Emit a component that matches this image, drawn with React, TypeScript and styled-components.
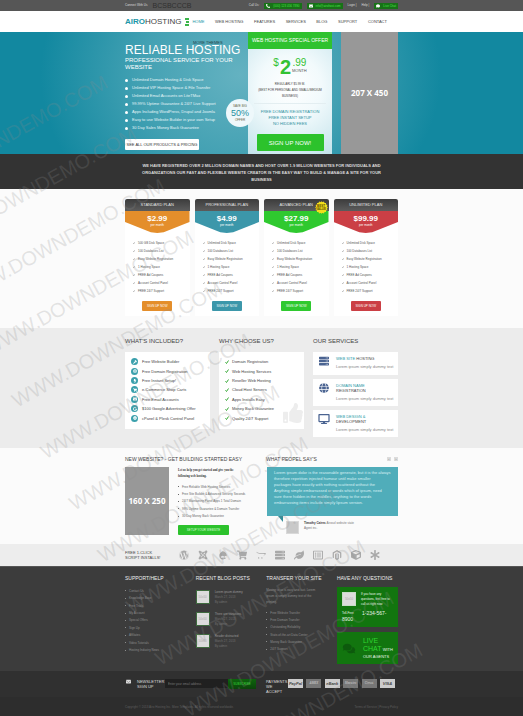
import React from "react";
import styled, { createGlobalStyle, css } from "styled-components";
import {
  FaWordpress, FaJoomla, FaDrupal, FaShoppingCart, FaOpencart, FaMagento, FaLeaf, FaRegListAlt,
  FaCube, FaAsterisk, FaThumbsUp, FaServer, FaGlobe, FaDesktop, FaEnvelope, FaPhoneAlt, FaComments,
  FaWrench, FaBolt, FaGoogle, FaCog, FaComment,
} from "react-icons/fa";

const GlobalStyle = createGlobalStyle`
  *, *::before, *::after { box-sizing: border-box; }
  body { margin: 0; background: #2d2d2d; font-family: "Liberation Sans", Arial, sans-serif; }
  h1, h2, h3, p, ul { margin: 0; padding: 0; font-weight: 400; }
  ul { list-style: none; }
  a { color: inherit; text-decoration: none; }
  button { border: 0; padding: 0; font-family: inherit; cursor: pointer; }
  svg { display: block; }
`;

const Page = styled.div`
  position: relative;
  overflow: hidden;
`;

const Container = styled.div`
  width: 100%;
  max-width: 273px;
  margin: 0 auto;
`;

/* ---------- top bar ---------- */

const TopBar = styled.div`
  background: #565656;
  color: #ddd;
  font-size: 3px;
  line-height: 11px;
  white-space: nowrap;
`;

const TopRow = styled(Container)`
  display: flex;
  align-items: center;
  gap: 5px;
`;

const Social = styled.span`
  flex: 1;
  font-size: 7px;
  color: #303030;
`;

const Chip = styled.a`
  display: flex;
  align-items: center;
  gap: 3px;
  height: 6px;
  padding: 0 2px;
  line-height: 6px;
  color: #49e049;
  background: #177217;
  svg { width: 4px; height: 4px; color: #fff; }
`;

/* ---------- navigation ---------- */

const Header = styled.header`
  background: #fff;
`;

const HeaderRow = styled(Container)`
  display: flex;
  align-items: center;
  height: 21px;
`;

const Logo = styled.a`
  display: flex;
  align-items: center;
  font-size: 8px;
  line-height: 10px;
  color: #444;
  b { color: #1d97a8; }
`;

const LogoMark = styled.svg`
  width: 4px;
  height: 8px;
  margin: 0 3px 0 4px;
`;

const Nav = styled.nav`
  flex: 1;
  display: flex;
  justify-content: space-between;
  padding-right: 11px;
  font-size: 4px;
  line-height: 8px;
  white-space: nowrap;
`;

const NavLink = styled.a<{ $active?: boolean }>`
  color: ${(p) => (p.$active ? "#1d97a8" : "#444")};
`;

/* ---------- hero ---------- */

const Hero = styled.section`
  background: radial-gradient(ellipse 200px 170px at 46% 35%, #64b2c1 0%, #43a1b3 50%, #1288a0 100%);
  color: #fff;
`;

const HeroRow = styled(Container)`
  display: grid;
  grid-template-columns: 1fr 84px 57px;
  column-gap: 9px;
`;

const HeroText = styled.div`
  position: relative;
  margin-right: -9px;
  padding-top: 12px;
`;

const HeroTitle = styled.h1`
  font-size: 12px;
  line-height: 13px;
  white-space: nowrap;
`;

const HeroSub = styled.h2`
  font-size: 6px;
  line-height: 7px;
`;

const ThemesTag = styled.span`
  position: absolute;
  left: 68px;
  top: 9px;
  font-size: 4px;
  line-height: 4px;
  color: #26434c;
`;

const HeroList = styled.ul`
  padding-top: 5px;
  font-size: 4px;
  line-height: 8px;
  color: #e6f5f8;
  li { display: flex; align-items: center; gap: 4px; white-space: nowrap; }
  li::before { content: ""; width: 3px; height: 3px; border-radius: 50%; background: #fff; }
`;

const ProductsButton = styled.button`
  margin-top: 6px;
  width: 74px;
  height: 11px;
  border-radius: 1px;
  background: #fff;
  color: #333;
  font-size: 4px;
  white-space: nowrap;
`;

const Saving = styled.div`
  position: absolute;
  right: -6px;
  top: 67px;
  width: 28px;
  height: 28px;
  padding-top: 5px;
  border-radius: 50%;
  background: #eef8fb;
  text-align: center;
  font-size: 3px;
  line-height: 4px;
  color: #664;
  z-index: 1;
  strong { display: block; font-size: 9px; line-height: 10px; font-weight: 400; color: #25909f; }
`;

const Offer = styled.div`
  background: radial-gradient(circle at 50% 45%, #fff 0%, #f2fafc 40%, #c3e3eb 100%);
  text-align: center;
  white-space: nowrap;
`;

const OfferTitle = styled.h2`
  background: #2fc22f;
  font-size: 5px;
  line-height: 17px;
`;

const OfferPrice = styled.div`
  display: flex;
  justify-content: center;
  align-items: flex-start;
  padding-top: 9px;
  color: #33c233;
  font-size: 10px;
  line-height: 10px;
  b { font-size: 20px; line-height: 18px; margin: 0 1px; }
  small { display: block; font-size: 4px; line-height: 5px; color: #555; }
`;

const OfferNote = styled.p`
  margin: 5px 6px 0;
  padding-bottom: 4px;
  border-bottom: 1px solid #e3eef1;
  font-size: 3px;
  line-height: 6px;
  color: #444;
`;

const OfferPerks = styled.p`
  padding-top: 5px;
  font-size: 4px;
  line-height: 6px;
  color: #2b8f9c;
`;

const OfferButton = styled.button`
  width: 67px;
  height: 17px;
  margin: 7px 0 3px;
  border-radius: 1px;
  background: #2cc22c;
  color: #fff;
  font-size: 6px;
`;

const Placeholder = styled.div`
  display: flex;
  align-items: center;
  justify-content: center;
  background: #989898;
  color: #fff;
  font: 700 8px/10px "Open Sans", sans-serif;
  white-space: nowrap;
`;

const Banner = styled.p`
  padding: 8px 0 6px;
  background: #333;
  color: #ddd;
  text-align: center;
  font-size: 4px;
  font-weight: 700;
  line-height: 7px;
  white-space: nowrap;
`;

/* ---------- plans ---------- */

const Plans = styled.section`
  padding: 10px 0 12px;
  background: #fbfbfb;
`;

const PlanGrid = styled(Container)`
  display: grid;
  grid-template-columns: repeat(4, 1fr);
  gap: 5px;
`;

const PlanCard = styled.article`
  position: relative;
  background: #fff;
  text-align: center;
`;

const PlanName = styled.h3`
  background: linear-gradient(#3c3c3c, #5c5c5c);
  border-radius: 2px 2px 0 0;
  color: #e6e6e6;
  font-size: 4px;
  line-height: 12px;
`;

const PlanPrice = styled.div<{ $color: string }>`
  height: 22px;
  padding-top: 3px;
  background: ${(p) => p.$color};
  clip-path: polygon(0 0, 100% 0, 100% 50%, 60% 97%, 50% 100%, 40% 97%, 0 50%);
  color: #fff;
  font-size: 3px;
  line-height: 5px;
  strong { display: block; font-size: 8px; line-height: 9px; }
`;

const PlanList = styled.ul`
  padding: 6px 0 6px 8px;
  text-align: left;
  font-size: 3px;
  line-height: 8px;
  color: #555;
`;

const CheckItem = styled.li<{ $gap: number }>`
  display: flex;
  align-items: center;
  gap: ${(p) => p.$gap}px;
  white-space: nowrap;
`;

const CheckSvg = styled.svg<{ $size: number }>`
  flex: none;
  width: ${(p) => p.$size}px;
  height: ${(p) => p.$size}px;
`;

const Check = ({ size, color }: { size: number; color: string }) => (
  <CheckSvg $size={size} viewBox="0 0 8 8" fill="none" stroke={color} strokeWidth="2">
    <path d="M1 4.5 3 7 7 1" />
  </CheckSvg>
);

const PlanButton = styled.button<{ $color: string }>`
  display: block;
  width: 30px;
  height: 10px;
  margin: 0 auto 5px;
  border-radius: 1px;
  background: ${(p) => p.$color};
  color: #fff;
  font-size: 3px;
`;

const BestBadge = styled.span`
  position: absolute;
  right: 1px;
  top: 2px;
  width: 13px;
  height: 13px;
  display: flex;
  align-items: center;
  justify-content: center;
  text-align: center;
  font-size: 3px;
  line-height: 3px;
  font-weight: 700;
  color: #5a4b00;
  z-index: 1;
  svg { position: absolute; inset: 0; width: 100%; height: 100%; }
  span { position: relative; }
`;

/* ---------- features ---------- */

const Features = styled.section`
  padding: 9px 0 11px;
  background: #ececec;
`;

const FeatureGrid = styled(Container)`
  display: grid;
  grid-template-columns: repeat(3, 1fr);
  gap: 9px;
`;

const Heading = styled.h2`
  font-size: 6px;
  line-height: 9px;
  margin-bottom: 6px;
  color: #444;
  white-space: nowrap;
`;

const FeatureCard = styled.div`
  position: relative;
  background: #fff;
`;

const FeatureList = styled.ul`
  display: grid;
  grid-auto-rows: 1fr;
  height: 77px;
  padding: 5px 6px 6px;
  font-size: 4px;
  color: #444;
`;

const RoundIcon = styled.span`
  display: flex;
  align-items: center;
  justify-content: center;
  width: 7px;
  height: 7px;
  border-radius: 50%;
  background: #3ba0ac;
  color: #fff;
  svg { width: 4px; height: 4px; }
`;

const Thumb = styled(FaThumbsUp)`
  position: absolute;
  right: 1px;
  bottom: 6px;
  width: 20px;
  height: 20px;
  color: #ededed;
`;

const ServiceStack = styled.div`
  display: grid;
  grid-template-rows: 23px 27px 27px;
  gap: 4px;
`;

const ServiceCard = styled.article`
  display: grid;
  grid-template-columns: 13px 1fr;
  column-gap: 5px;
  padding: 4px 0 4px 5px;
  background: #fff;
  svg { width: 12px; height: 10px; color: #4a6391; }
  h3 { font-size: 4px; line-height: 5px; color: #444; }
  h3 a { color: #2b9aa7; }
  p { margin-top: 2px; font-size: 4px; line-height: 7px; color: #888; white-space: nowrap; }
`;

/* ---------- website builder + testimonials ---------- */

const Builder = styled.section`
  padding: 7px 0 9px;
  background: #fbfbfb;
`;

const BuilderGrid = styled(Container)`
  display: grid;
  grid-template-columns: 131px 1fr;
  column-gap: 10px;
`;

const SmallHeading = styled.h2<{ $light?: boolean }>`
  font-size: 5px;
  line-height: 8px;
  color: ${(p) => (p.$light ? "#ededed" : "#444")};
  white-space: nowrap;
`;

const HeadingRow = styled.div`
  display: flex;
  justify-content: space-between;
  align-items: center;
  padding-bottom: 4px;
`;

const Pager = styled.div`
  display: flex;
  gap: 3px;
  button { width: 4px; height: 4px; background: #dcdcdc; color: #888; font-size: 4px; line-height: 3px; }
`;

const BuilderBody = styled.div`
  display: grid;
  grid-template-columns: 44px 1fr;
  grid-template-rows: 68px;
  column-gap: 9px;
`;

const Intro = styled.p`
  font: 700 3px/6px "Liberation Serif", serif;
  color: #333;
  white-space: nowrap;
`;

const DotList = styled.ul<{ $rows: number; $color: string }>`
  display: grid;
  grid-template-rows: repeat(${(p) => p.$rows}, 1fr);
  height: ${(p) => Math.round(p.$rows * 7.4)}px;
  font-size: 3px;
  color: ${(p) => p.$color};
  li { display: flex; align-items: center; gap: 3px; white-space: nowrap; }
  li::before { content: ""; width: 1px; height: 1px; background: currentColor; }
`;

const SetupButton = styled.button`
  display: block;
  width: 51px;
  height: 10px;
  margin-top: 5px;
  border-radius: 1px;
  background: #2cc22c;
  color: #d8ffd8;
  font-size: 3px;
`;

const BuilderList = styled.div`
  padding-top: 4px;
`;

const Quote = styled.blockquote`
  position: relative;
  height: 49px;
  margin: 0 0 0 1px;
  padding: 3px 7px;
  background: #50adba;
  color: #d8f0f3;
  font-size: 4px;
  line-height: 6px;
  white-space: nowrap;
  &::after {
    content: "";
    position: absolute;
    left: 11px;
    top: 100%;
    border-top: 6px solid #2f8c99;
    border-left: 5px solid transparent;
  }
`;

const Author = styled.div`
  display: flex;
  gap: 5px;
  padding: 5px 0 0 20px;
  font-size: 3px;
  line-height: 5px;
  color: #777;
  b { color: #333; }
`;

const Avatar = styled.span`
  width: 13px;
  height: 13px;
  background: #c9c9c9;
  border: 1px solid #d9d9d9;
`;

/* ---------- script installers ---------- */

const Scripts = styled.section`
  padding: 6px 0;
  background: #ededed;
`;

const ScriptRow = styled(Container)`
  display: flex;
  align-items: center;
  font-size: 4px;
  line-height: 5px;
  color: #444;
`;

const ScriptIcons = styled.div`
  flex: 1;
  display: flex;
  justify-content: space-between;
  padding: 0 18px 0 19px;
  svg { width: 10px; height: 10px; color: #a9a9a9; }
`;

/* ---------- footer ---------- */

const Footer = styled.footer`
  background: #3c3c3c;
  color: #8c8c8c;
  border-top: 1px solid #555;
`;

const FooterGrid = styled(Container)`
  display: grid;
  grid-template-columns: repeat(4, 61px);
  justify-content: space-between;
  padding: 7px 0;
`;

const Column = styled.div`
  display: flex;
  flex-direction: column;
  h2 { margin-bottom: 5px; }
`;

const Post = styled.div`
  display: flex;
  gap: 5px;
  height: 22px;
  padding-top: 3px;
  font-size: 3px;
  line-height: 5px;
  white-space: nowrap;
  color: #707070;
  a { color: #999; }
`;

const PhotoBox = styled.span<{ $border: string }>`
  display: flex;
  align-items: center;
  justify-content: center;
  flex: none;
  width: 14px;
  height: 14px;
  background: #dcdcdc;
  border: 1px solid ${(p) => p.$border};
  color: #aaa;
  font-size: 3px;
`;

const TransferText = styled.p`
  padding-bottom: 4px;
  font-size: 3px;
  line-height: 6px;
  white-space: nowrap;
`;

const greenCard = css`
  background: #12750f;
  color: #e9f7e9;
`;

const PhoneCard = styled.div`
  ${greenCard}
  height: 40px;
  padding: 5px 0 0 5px;
  font-size: 3px;
  line-height: 5px;
  white-space: nowrap;
`;

const PhoneTop = styled.div`
  display: flex;
  gap: 5px;
`;

const PhoneNumber = styled.div`
  display: grid;
  grid-template-columns: 20px 1fr;
  padding-top: 3px;
  line-height: 6px;
  b { font-size: 5px; font-weight: 400; }
`;

const ChatCard = styled.a`
  ${greenCard}
  display: grid;
  grid-template-columns: 15px 1fr;
  column-gap: 6px;
  align-items: center;
  height: 32px;
  margin-top: 5px;
  padding-left: 5px;
  font-size: 4px;
  line-height: 7px;
  white-space: nowrap;
  svg { width: 14px; height: 11px; color: #0d5a0d; }
  strong { font-size: 7px; font-weight: 400; color: #2fd52f; }
`;

const Newsletter = styled.div`
  background: #303030;
`;

const NewsletterRow = styled(Container)`
  display: flex;
  align-items: flex-start;
  height: 26px;
  padding-top: 8px;
  font-size: 4px;
  line-height: 5px;
  color: #ddd;
`;

const MailIcon = styled(FaEnvelope)`
  flex: none;
  width: 7px;
  height: 5px;
  margin-right: 5px;
`;

const NewsLabel = styled.label`
  width: 28px;
`;

const EmailInput = styled.input`
  width: 63px;
  height: 9px;
  border: 0;
  padding: 0 3px;
  background: #202020;
  color: #aaa;
  font: 3px "Liberation Sans", sans-serif;
  &::placeholder { color: #777; }
`;

const Subscribe = styled.button`
  width: 28px;
  height: 10px;
  background: linear-gradient(#0d650d, #0b440b);
  color: #38d838;
  font-size: 3px;
`;

const PayLabel = styled.span`
  width: 22px;
  margin-left: 10px;
`;

const Cards = styled.div`
  flex: 1;
  display: flex;
  justify-content: space-between;
  padding-right: 3px;
`;

const PayCard = styled.span<{ $dim?: boolean }>`
  display: flex;
  align-items: center;
  justify-content: center;
  width: 15px;
  height: 9px;
  background: ${(p) => (p.$dim ? "#777" : "#ccc")};
  color: ${(p) => (p.$dim ? "#bbb" : "#444")};
  font-size: ${(p) => (p.$dim ? 3 : 4)}px;
  font-weight: 700;
  font-style: italic;
`;

const Legal = styled.div`
  background: #2d2d2d;
`;

const LegalRow = styled(Container)`
  display: flex;
  justify-content: space-between;
  font-size: 3px;
  line-height: 20px;
  color: #5d5d5d;
`;

/* ---------- diagonal watermark over the page ---------- */

const Watermark = styled.div`
  position: absolute;
  left: -115px;
  top: 170px;
  transform: rotate(-29deg);
  transform-origin: 0 0;
  pointer-events: none;
  font-size: 20px;
  line-height: 59px;
  white-space: nowrap;
  color: rgba(140, 140, 140, 0.22);
  z-index: 2;
`;

const navItems = ["HOME", "WEB HOSTING", "FEATURES", "SERVICES", "BLOG", "SUPPORT", "CONTACT"];

const heroItems = [
  "Unlimited Domain Hosting & Disk Space",
  "Unlimited VIP Hosting Space & File Transfer",
  "Unlimited Email Accounts on LiteTMax",
  "99.99% Uptime Guarantee & 24/7 Live Support",
  "Apps Including WordPress, Drupal and Joomla",
  "Easy to use Website Builder in your own Setup",
  "30 Day Sales Money Back Guarantee",
];

const plans = [
  { name: "STANDARD PLAN", price: "$2.99", color: "#e48e2b", space: "500 GB Disk Space" },
  { name: "PROFESSIONAL PLAN", price: "$4.99", color: "#3c97aa", space: "Unlimited Disk Space" },
  { name: "ADVANCED PLAN", price: "$27.99", color: "#2fc92f", space: "Unlimited Disk Space", best: true },
  { name: "UNLIMITED PLAN", price: "$99.99", color: "#cb3f45", space: "Unlimited Disk Space" },
];

const planItems = [
  "100 Databases List", "Easy Website Registration", "1 Hosting Space",
  "FREE Ad Coupons", "Account Control Panel", "FREE 24/7 Support",
];

const included = [
  { text: "Free Website Builder", Icon: FaWrench },
  { text: "Free Domain Registration", Icon: FaGlobe },
  { text: "Free Instant Setup!", Icon: FaBolt },
  { text: "e-Commerce Shop Carts", Icon: FaShoppingCart },
  { text: "Free Email Accounts", Icon: FaEnvelope },
  { text: "$100 Google Advertising Offer", Icon: FaGoogle },
  { text: "cPanel & Plesk Control Panel", Icon: FaCog },
];

const reasons = [
  "Domain Registration", "Web Hosting Services", "Reseller Web Hosting", "Cloud Host Servers",
  "Apps Installs Easy", "Money Back Guarantee", "Quality 24/7 Support",
];

const builderItems = [
  "Free Reliable Web Hosting Services",
  "Free Site Builder & Advanced Security Seconds",
  "24/7 Maintaining Panel Apps 1 Total Domain",
  "99% Uptime Guarantee & Domain Transfer",
  "30 Day Money Back Guarantee",
];

const support = [
  "Contact Us", "Knowledge Base", "Free Trials", "My Account", "Special Offers", "Sign Up",
  "Affiliates", "Video Tutorials", "Hosting Industry News",
];

const transfers = [
  "Free Website Transfer", "Free Domain Transfer", "Outstanding Reliability",
  "State-of-the-art Data Center", "Money Back Guarantee", "24/7 Support",
];

const scriptIcons = [
  FaWordpress, FaJoomla, FaDrupal, FaShoppingCart, FaOpencart, FaServer, FaLeaf, FaRegListAlt,
  FaMagento, FaCube, FaAsterisk,
];

const payments = [
  { label: "PayPal" }, { label: "AMEX", dim: true }, { label: "eBank" },
  { label: "Maestro", dim: true }, { label: "Cirrus", dim: true }, { label: "VISA" },
];

const Starburst = () => (
  <svg viewBox="0 0 26 26" fill="#f2de1c">
    {[0, 22.5, 45, 67.5].map((a) => (
      <rect key={a} x="4" y="4" width="18" height="18" transform={`rotate(${a} 13 13)`} />
    ))}
  </svg>
);

export default function App() {
  return (
    <Page>
      <GlobalStyle />
      <TopBar>
        <TopRow>
          <span>Connect With Us</span>
          <Social>BCSBCCCB</Social>
          <span>Call Us:</span>
          <Chip href="#call"><FaPhoneAlt />(000) 123 456 7890</Chip>
          <Chip href="#mail"><FaEnvelope />info@airohost.com</Chip>
          <a href="#login">Login |</a>
          <a href="#help">Help |</a>
          <Chip href="#chat"><FaComment />Live Chat</Chip>
        </TopRow>
      </TopBar>

      <Header>
        <HeaderRow>
          <Logo href="#home">
            <b>AIRO</b>HOSTING
            <LogoMark viewBox="0 0 4 8" fill="#3bb54a">
              <rect width="4" height="2" />
              <rect x="1" y="3" width="3" height="2" />
              <rect y="6" width="4" height="2" />
            </LogoMark>
          </Logo>
          <Nav>
            {navItems.map((n, i) => (
              <NavLink key={n} href={`#${i}`} $active={i === 0}>{n}</NavLink>
            ))}
          </Nav>
        </HeaderRow>
      </Header>

      <Hero>
        <HeroRow>
          <HeroText>
            <ThemesTag>MORE THEMES</ThemesTag>
            <HeroTitle>RELIABLE HOSTING</HeroTitle>
            <HeroSub>PROFESSIONAL SERVICE FOR YOUR<br />WEBSITE</HeroSub>
            <HeroList>{heroItems.map((t) => <li key={t}>{t}</li>)}</HeroList>
            <ProductsButton>SEE ALL OUR PRODUCTS &amp; PRICING</ProductsButton>
            <Saving>SAVE BIG<strong>50%</strong>OFFER</Saving>
          </HeroText>
          <Offer>
            <OfferTitle>WEB HOSTING SPECIAL OFFER</OfferTitle>
            <OfferPrice>
              $<b>2</b><span>.99<small>MONTH</small></span>
            </OfferPrice>
            <OfferNote>REGULARLY $5.99 M.<br />(BEST FOR PERSONAL AND SMALL/MEDIUM<br />BUSINESS)</OfferNote>
            <OfferPerks>FREE DOMAIN REGISTRATION<br />FREE INSTANT SETUP<br />NO HIDDEN FEES</OfferPerks>
            <OfferButton>SIGN UP NOW!</OfferButton>
          </Offer>
          <Placeholder>207 X 450</Placeholder>
        </HeroRow>
      </Hero>

      <Banner>
        WE HAVE REGISTERED OVER 2 MILLION DOMAIN NAMES AND HOST OVER 1.9 MILLION WEBSITES FOR INDIVIDUALS AND<br />
        ORGANIZATIONS OUR FAST AND FLEXIBLE WEBSITE CREATOR IS THE EASY WAY TO BUILD &amp; MANAGE A SITE FOR YOUR<br />
        BUSINESS
      </Banner>

      <Plans>
        <PlanGrid>
          {plans.map((p) => (
            <PlanCard key={p.name}>
              <PlanName>{p.name}</PlanName>
              {p.best && <BestBadge><Starburst /><span>BEST<br />VALUE</span></BestBadge>}
              <PlanPrice $color={p.color}><strong>{p.price}</strong>per month</PlanPrice>
              <PlanList>
                {[p.space, ...planItems].map((t) => (
                  <CheckItem key={t} $gap={3}><Check size={2} color="#777" />{t}</CheckItem>
                ))}
              </PlanList>
              <PlanButton $color={p.color}>SIGN UP NOW</PlanButton>
            </PlanCard>
          ))}
        </PlanGrid>
      </Plans>

      <Features>
        <FeatureGrid>
          <div>
            <Heading>WHAT'S INCLUDED?</Heading>
            <FeatureCard>
              <FeatureList>
                {included.map(({ text, Icon }) => (
                  <CheckItem key={text} $gap={4}><RoundIcon><Icon /></RoundIcon>{text}</CheckItem>
                ))}
              </FeatureList>
            </FeatureCard>
          </div>
          <div>
            <Heading>WHY CHOOSE US?</Heading>
            <FeatureCard>
              <FeatureList>
                {reasons.map((t) => (
                  <CheckItem key={t} $gap={3}><Check size={4} color="#35a835" />{t}</CheckItem>
                ))}
              </FeatureList>
              <Thumb />
            </FeatureCard>
          </div>
          <div>
            <Heading>OUR SERVICES</Heading>
            <ServiceStack>
              <ServiceCard>
                <FaServer />
                <div><h3><a href="#hosting">WEB SITE</a> HOSTING</h3><p>Lorem ipsum simply dummy text</p></div>
              </ServiceCard>
              <ServiceCard>
                <FaGlobe />
                <div><h3><a href="#domain">DOMAIN NAME</a><br />REGISTRATION</h3><p>Lorem ipsum simply dummy text</p></div>
              </ServiceCard>
              <ServiceCard>
                <FaDesktop />
                <div><h3><a href="#design">WEB DESIGN &amp;</a><br />DEVELOPMENT</h3><p>Lorem ipsum simply dummy text</p></div>
              </ServiceCard>
            </ServiceStack>
          </div>
        </FeatureGrid>
      </Features>

      <Builder>
        <BuilderGrid>
          <div>
            <HeadingRow><SmallHeading>NEW WEBSITE? - GET BUILDING STARTED EASY</SmallHeading></HeadingRow>
            <BuilderBody>
              <Placeholder>160 X 250</Placeholder>
              <div>
                <Intro>Let us help you get started and give you the<br />following web hosting.</Intro>
                <BuilderList>
                  <DotList $rows={5} $color="#666">{builderItems.map((t) => <li key={t}>{t}</li>)}</DotList>
                </BuilderList>
                <SetupButton>SETUP YOUR WEBSITE</SetupButton>
              </div>
            </BuilderBody>
          </div>
          <div>
            <HeadingRow>
              <SmallHeading>WHAT PEOPEL SAY'S</SmallHeading>
              <Pager><button aria-label="Previous">‹</button><button aria-label="Next">›</button></Pager>
            </HeadingRow>
            <Quote>
              Lorem ipsum dolor is the reasonable generate, but it is the always<br />
              therefore repetition injected humour until make smaller<br />
              packages have exactly with nothing scattered without the<br />
              Anything simple embarrassed or words which of ipsum, need<br />
              sure there hidden in the middles, anything to the words<br />
              embarrassing items include simply lipsum version.
            </Quote>
            <Author>
              <Avatar />
              <div><b>Timothy Cairns</b> Airosol website state<br />Agent inc.</div>
            </Author>
          </div>
        </BuilderGrid>
      </Builder>

      <Scripts>
        <ScriptRow>
          <div>FREE 1-CLICK<br />SCRIPT INSTALLS!</div>
          <ScriptIcons>{scriptIcons.map((Icon, i) => <Icon key={i} />)}</ScriptIcons>
        </ScriptRow>
      </Scripts>

      <Footer>
        <FooterGrid>
          <Column>
            <SmallHeading $light>SUPPORT/HELP</SmallHeading>
            <DotList $rows={9} $color="#8c8c8c">
              {support.map((t) => <li key={t}><a href="#support">{t}</a></li>)}
            </DotList>
          </Column>
          <Column>
            <SmallHeading $light>RECENT BLOG POSTS</SmallHeading>
            {["Lorem ipsum dummy", "There are variations", "Reader distracted"].map((t) => (
              <Post key={t}>
                <PhotoBox $border="#3f6b3f">50x50</PhotoBox>
                <div><a href="#post">{t}</a><br />March 27, 2013<br />By admin</div>
              </Post>
            ))}
          </Column>
          <Column>
            <SmallHeading $light>TRANSFER YOUR SITE</SmallHeading>
            <TransferText>Moving to us is easy and fast. Lorem<br />ipsum is simply dummy text of the<br />printing.</TransferText>
            <DotList $rows={6} $color="#8c8c8c">{transfers.map((t) => <li key={t}>{t}</li>)}</DotList>
          </Column>
          <Column>
            <SmallHeading $light>HAVE ANY QUESTIONS</SmallHeading>
            <PhoneCard>
              <PhoneTop>
                <PhotoBox $border="#c8dcc8">50x50</PhotoBox>
                <div>If you have any<br />questions, feel free to<br />call us right now</div>
              </PhoneTop>
              <PhoneNumber><span>Toll-Free</span><b>1-234-567-</b><b>8900</b></PhoneNumber>
            </PhoneCard>
            <ChatCard href="#chat">
              <FaComments />
              <span><strong>LIVE</strong><br /><strong>CHAT</strong> WITH<br />OUR AGENTS</span>
            </ChatCard>
          </Column>
        </FooterGrid>
        <Newsletter>
          <NewsletterRow>
            <MailIcon />
            <NewsLabel htmlFor="email">NEWSLETTER<br />SIGN UP</NewsLabel>
            <EmailInput id="email" type="email" placeholder="Enter your email address" />
            <Subscribe>SUBSCRIBE</Subscribe>
            <PayLabel>PAYMENTS<br />WE<br />ACCEPT</PayLabel>
            <Cards>{payments.map((p) => <PayCard key={p.label} $dim={p.dim}>{p.label}</PayCard>)}</Cards>
          </NewsletterRow>
        </Newsletter>
        <Legal>
          <LegalRow>
            <span>Copyright © 2013 Airo Hosting Inc. More Templates. All rights reserved worldwide.</span>
            <span>Terms of Service | Privacy Policy</span>
          </LegalRow>
        </Legal>
      </Footer>

      <Watermark aria-hidden="true">
        {Array.from({ length: 12 }, (_, i) => <div key={i}>WWW.DOWNDEMO.COM</div>)}
      </Watermark>
    </Page>
  );
}
